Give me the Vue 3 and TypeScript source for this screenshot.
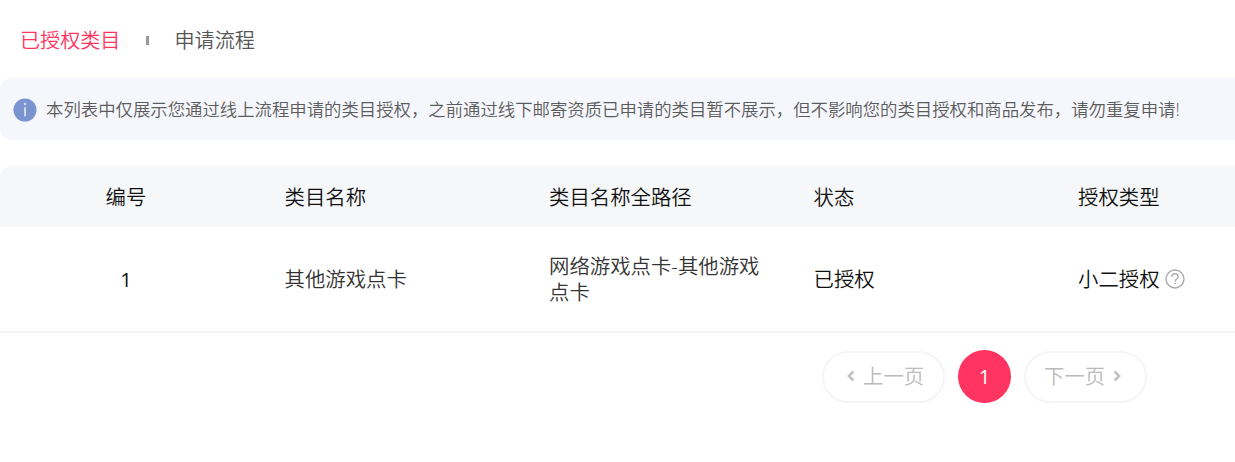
<template>
  <div class="page">
    <div class="tabs">
      <span
        v-for="tab in tabs"
        :key="tab"
        class="tab"
        :class="{ active: tab === activeTab }"
        @click="activeTab = tab"
      >{{ tab }}</span>
    </div>

    <div class="notice">
      <svg class="notice-icon" viewBox="0 0 24 24">
        <circle cx="12" cy="12" r="11.5" fill="#7b93cf" />
        <path d="M12 9.3v8.9" stroke="#cfd9f2" stroke-width="2" />
        <circle cx="12" cy="6" r="1.3" fill="#cfd9f2" />
      </svg>
      <span class="notice-text">{{ notice }}</span>
    </div>

    <div class="table">
      <div class="row head">
        <div v-for="col in columns" :key="col" class="cell">{{ col }}</div>
      </div>
      <div v-for="item in list" :key="item.id" class="row body">
        <div class="cell">{{ item.id }}</div>
        <div class="cell gray">{{ item.name }}</div>
        <div class="cell gray">{{ item.path }}</div>
        <div class="cell">{{ item.status }}</div>
        <div class="cell">
          {{ item.type }}
          <svg class="help" viewBox="0 0 20 20" fill="none" stroke="#aaaaae" stroke-width="1.4">
            <circle cx="10" cy="10" r="9" />
            <path d="M6.9 8.1C6.9 6.1 8.1 4.8 10 4.8s3.1 1.2 3.1 2.9c0 2.1-3 2.4-3 4.7" />
            <path d="M10.1 13.8v1.5" />
          </svg>
        </div>
      </div>
    </div>

    <div class="pager">
      <div class="page-btn prev">
        <svg class="arrow" viewBox="0 0 8 12"><path d="M6.3 1.6L2 6l4.3 4.4" /></svg>
        <span class="page-label">上一页</span>
      </div>
      <div class="page-num">1</div>
      <div class="page-btn next">
        <span class="page-label">下一页</span>
        <svg class="arrow" viewBox="0 0 8 12"><path d="M1.7 1.6L6 6l-4.3 4.4" /></svg>
      </div>
    </div>
  </div>
</template>

<script setup lang="ts">
import { ref } from 'vue'

interface Category {
  id: number
  name: string
  path: string
  status: string
  type: string
}

const tabs = ['已授权类目', '申请流程']
const activeTab = ref('已授权类目')

const notice = '本列表中仅展示您通过线上流程申请的类目授权，之前通过线下邮寄资质已申请的类目暂不展示，但不影响您的类目授权和商品发布，请勿重复申请!'

const columns = ['编号', '类目名称', '类目名称全路径', '状态', '授权类型']

const list = ref<Category[]>([
  {
    id: 1,
    name: '其他游戏点卡',
    path: '网络游戏点卡-其他游戏点卡',
    status: '已授权',
    type: '小二授权'
  }
])
</script>

<style>
body {
  background: #fff;
}
</style>

<style scoped>
.page {
  width: 100%;
  height: 462px;
  overflow: hidden;
  font-family: "Open Sans", "Noto Sans CJK SC", sans-serif;
  font-weight: 350;
  font-size: 20.4px;
  color: #111;
  background: #fff;
}

.tabs {
  display: flex;
  align-items: center;
  height: 78px;
  padding-left: 20px;
  box-sizing: border-box;
  font-size: 20.1px;
}

.tab {
  display: flex;
  align-items: center;
  color: #555;
  cursor: pointer;
}

.tab.active {
  color: #ff3460;
}

/* 标签之间的竖线 */
.tab + .tab::before {
  content: "";
  width: 3px;
  height: 9px;
  margin: 2px 25px 0 26px;
  background: #999;
}

.notice {
  display: flex;
  align-items: center;
  height: 62px;
  padding-left: 12.5px;
  border-radius: 12px 0 0 12px;
  background: #f6f7fc;
  color: #5c5c5c;
}

.notice-icon {
  width: 24px;
  height: 24px;
  margin: 2px 9.5px 0 0;
  flex: none;
}

.notice-text {
  padding-bottom: 2px;
  font-size: 17.39px;
  white-space: nowrap;
}

.table {
  margin-top: 26px;
}

.row {
  display: grid;
  grid-template-columns: 264px repeat(4, 264.5px);
  align-items: center;
}

.row.head {
  height: 61px;
  border-radius: 12px 0 0 0;
  background: #f6f7f9;
}

.row.body {
  height: 106px;
  box-sizing: border-box;
  border-bottom: 2px solid #f4f5f7;
}

.cell {
  padding: 0 20px 0 20.5px;
  line-height: 26px;
}

.cell:first-child {
  padding: 0 12px 0 0;
  text-align: center;
}

.row.body .cell:first-child {
  font-weight: 400;
}

.cell.gray {
  color: #333;
}

.help {
  width: 20px;
  height: 20px;
  vertical-align: -2px;
}

.pager {
  display: flex;
  align-items: center;
  gap: 13px;
  padding: 17px 0 0 822px;
}

.page-btn {
  display: flex;
  align-items: center;
  gap: 8px;
  width: 123px;
  height: 52px;
  box-sizing: border-box;
  border: 2px solid #f5f5f7;
  border-radius: 26px;
  color: #bbb;
  cursor: not-allowed;
}

.page-btn.prev {
  padding-left: 23px;
}

.page-btn.next {
  padding-left: 18px;
}

.page-label {
  padding-bottom: 3px;
}

.arrow {
  width: 8px;
  height: 12px;
  margin-bottom: 2px;
  fill: none;
  stroke: #c0c0c0;
  stroke-width: 2.6;
}

.page-num {
  width: 53px;
  height: 53px;
  border-radius: 50%;
  background: #ff3460;
  color: #fff;
  font-weight: 400;
  line-height: 53px;
  text-align: center;
}
</style>
